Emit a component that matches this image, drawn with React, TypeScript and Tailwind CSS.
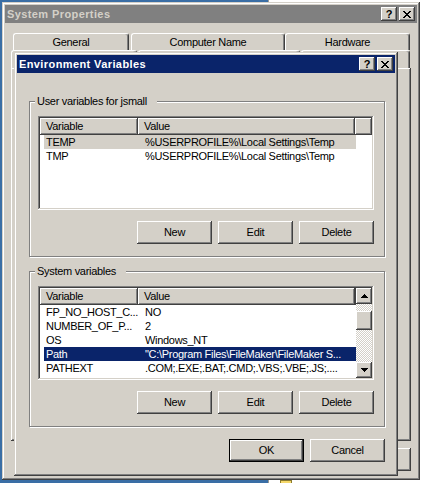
import React from 'react';

// classic 3D edges
const raised = 'shadow-[inset_-1px_-1px_#404040,inset_1px_1px_#ffffff,inset_-2px_-2px_#808080,inset_2px_2px_#d4d0c8]';
const frame = 'shadow-[inset_-1px_-1px_#404040,inset_1px_1px_#d4d0c8,inset_-2px_-2px_#808080,inset_2px_2px_#ffffff]';
const sunken = 'shadow-[inset_-1px_-1px_#ffffff,inset_1px_1px_#808080,inset_-2px_-2px_#d4d0c8,inset_2px_2px_#404040]';
const headerEdge = 'shadow-[inset_-1px_-1px_#404040,inset_1px_1px_#ffffff,inset_-2px_-2px_#808080]';

type Row = { name: string; value: string; sel?: 'gray' | 'navy' };

const userRows: Row[] = [
  { name: 'TEMP', value: '%USERPROFILE%\\Local Settings\\Temp', sel: 'gray' },
  { name: 'TMP', value: '%USERPROFILE%\\Local Settings\\Temp' },
];

const systemRows: Row[] = [
  { name: 'FP_NO_HOST_C...', value: 'NO' },
  { name: 'NUMBER_OF_P...', value: '2' },
  { name: 'OS', value: 'Windows_NT' },
  { name: 'Path', value: '"C:\\Program Files\\FileMaker\\FileMaker S...', sel: 'navy' },
  { name: 'PATHEXT', value: '.COM;.EXE;.BAT;.CMD;.VBS;.VBE;.JS;....' },
];

const CloseGlyph = () => (
  <svg width="8" height="7" viewBox="0 0 8 7" shapeRendering="crispEdges">
    <rect x="0" y="0" width="2" height="1" />
    <rect x="6" y="0" width="2" height="1" />
    <rect x="1" y="1" width="2" height="1" />
    <rect x="5" y="1" width="2" height="1" />
    <rect x="2" y="2" width="4" height="1" />
    <rect x="3" y="3" width="2" height="1" />
    <rect x="2" y="4" width="4" height="1" />
    <rect x="1" y="5" width="2" height="1" />
    <rect x="5" y="5" width="2" height="1" />
    <rect x="0" y="6" width="2" height="1" />
    <rect x="6" y="6" width="2" height="1" />
  </svg>
);

const Arrow = ({ up }: { up?: boolean }) => (
  <svg width="7" height="4" viewBox="0 0 7 4" shapeRendering="crispEdges" className={up ? '' : 'rotate-180'}>
    <rect x="3" y="0" width="1" height="1" />
    <rect x="2" y="1" width="3" height="1" />
    <rect x="1" y="2" width="5" height="1" />
    <rect x="0" y="3" width="7" height="1" />
  </svg>
);

const CaptionButtons = () => (
  <div className="flex gap-[2px]">
    <div className={`flex h-[14px] w-[16px] items-center justify-center bg-[#d4d0c8] text-black ${raised}`}>
      <span className="text-[11px] font-bold leading-none tracking-normal">?</span>
    </div>
    <div className={`flex h-[14px] w-[16px] items-center justify-center bg-[#d4d0c8] text-black ${raised}`}>
      <CloseGlyph />
    </div>
  </div>
);

const TitleBar = ({ title, active }: { title: string; active?: boolean }) => (
  <div
    className={`flex h-[18px] items-center justify-between pl-[2px] pr-[2px] ${
      active ? 'bg-[#0a246a] text-white' : 'bg-[#808080] text-[#d4d0c8]'
    }`}
  >
    <span className="font-bold tracking-[0.4px]">{title}</span>
    <CaptionButtons />
  </div>
);

const Btn = ({ label, def }: { label?: string; def?: boolean }) => (
  <div className={`h-[23px] w-[75px] shrink-0 ${def ? 'border border-black' : ''}`}>
    <div className={`flex h-full w-full items-center justify-center bg-[#d4d0c8] ${raised}`}>{label}</div>
  </div>
);

const Tab = ({ className, children }: { className: string; children?: React.ReactNode }) => (
  <div
    className={`flex h-full items-center justify-center rounded-t-[3px] border-l border-r border-t border-l-white border-r-[#404040] border-t-white bg-[#d4d0c8] pt-[1px] shadow-[inset_-1px_0_#808080] ${className}`}
  >
    {children}
  </div>
);

const ScrollBar = () => (
  <div className="flex h-full w-[16px] shrink-0 flex-col">
    <div className={`flex h-[16px] items-center justify-center bg-[#d4d0c8] ${raised}`}>
      <Arrow up />
    </div>
    <div className="flex-1 bg-[repeating-conic-gradient(#d4d0c8_0_25%,#ffffff_0_50%)] bg-[length:2px_2px] pt-[7px]">
      <div className={`h-[19px] w-[16px] bg-[#d4d0c8] ${raised}`} />
    </div>
    <div className={`flex h-[16px] items-center justify-center bg-[#d4d0c8] ${raised}`}>
      <Arrow />
    </div>
  </div>
);

const ListView = ({ rows, scroll }: { rows: Row[]; scroll?: boolean }) => (
  <div className={`h-[94px] w-full bg-white p-[2px] ${sunken}`}>
    <div className="flex h-full overflow-hidden">
      <div className="min-w-0 flex-1 overflow-hidden">
        <div className="flex h-[17px]">
          <div className={`w-[98px] shrink-0 bg-[#d4d0c8] pl-[6px] leading-[17px] ${headerEdge}`}>Variable</div>
          <div className={`w-[217px] shrink-0 bg-[#d4d0c8] pl-[6px] leading-[17px] ${headerEdge}`}>Value</div>
          <div className={`flex-1 bg-[#d4d0c8] ${headerEdge}`} />
        </div>
        {rows.map((r) => (
          <div
            key={r.name}
            className={`ml-[4px] flex h-[14px] w-[312px] leading-[14px] ${
              r.sel === 'navy' ? 'bg-[#0a246a] text-white' : r.sel === 'gray' ? 'bg-[#d4d0c8]' : ''
            }`}
          >
            <div className="w-[94px] shrink-0 overflow-hidden whitespace-nowrap pl-[2px]">{r.name}</div>
            <div className="min-w-0 flex-1 overflow-hidden whitespace-nowrap pl-[7px]">{r.value}</div>
          </div>
        ))}
      </div>
      {scroll && <ScrollBar />}
    </div>
  </div>
);

const Group = ({ label, className = '', children }: { label: string; className?: string; children: React.ReactNode }) => (
  <div
    className={`relative h-[156px] border border-[#808080] pl-[8px] pr-[10px] pt-[14px] shadow-[1px_1px_0_#ffffff,inset_1px_1px_0_#ffffff] ${className}`}
  >
    <span className="absolute left-[5px] top-[-8px] bg-[#d4d0c8] pl-[2px] pr-[10px] leading-[14px]">{label}</span>
    {children}
  </div>
);

// only the edges of the second tab row, the page and the Apply button peek out
const SystemProperties = () => (
  <div className={`absolute left-[2px] top-[2px] h-[478px] w-[418px] bg-[#d4d0c8] p-[3px] ${frame}`}>
    <TitleBar title="System Properties" />
    <div className="px-[6px] pt-[10px]">
      <div className="flex h-[17px] pl-[2px]">
        <Tab className="w-[116px]">General</Tab>
        <Tab className="ml-[2px] w-[154px]">Computer Name</Tab>
        <Tab className="w-[125px]">Hardware</Tab>
      </div>
      <div className="flex h-[18px]">
        <Tab className="w-[126px]" />
        <Tab className="ml-[1px] w-[162px]" />
        <Tab className="ml-[1px] w-[109px]" />
      </div>
      <div className={`h-[373px] w-[400px] ${headerEdge}`} />
      <div className="mt-[7px] flex w-[400px] justify-end gap-[6px]">
        <Btn />
        <Btn />
        <Btn />
      </div>
    </div>
  </div>
);

const EnvironmentVariables = () => (
  <div className={`absolute left-[14px] top-[52px] h-[424px] w-[384px] bg-[#d4d0c8] p-[3px] ${frame}`}>
    <TitleBar title="Environment Variables" active />
    <div className="pl-[12px] pr-[10px] pt-[28px]">
      <Group label="User variables for jsmall">
        <ListView rows={userRows} />
        <div className="mt-[11px] flex justify-end gap-[6px]">
          <Btn label="New" />
          <Btn label="Edit" />
          <Btn label="Delete" />
        </div>
      </Group>
      <Group label="System variables" className="mt-[14px]">
        <ListView rows={systemRows} scroll />
        <div className="mt-[11px] flex justify-end gap-[6px]">
          <Btn label="New" />
          <Btn label="Edit" />
          <Btn label="Delete" />
        </div>
      </Group>
      <div className="mt-[12px] flex justify-end gap-[6px]">
        <Btn label="OK" def />
        <Btn label="Cancel" />
      </div>
    </div>
  </div>
);

export default function App() {
  return (
    <div className="relative h-[483px] w-[422px] overflow-hidden bg-[#3a6ea5] font-['Liberation_Sans',Arial,sans-serif] text-[11px] tracking-[-0.3px] text-black">
      {/* explorer window sitting behind, top right */}
      <div className="absolute left-[268px] top-0 h-full w-[154px] border-l border-[#9c9a94] bg-white">
        <div className="absolute left-[11px] top-[480px] h-[3px] w-[12px] border border-b-0 border-[#8a7a30] bg-[#f5d86a]" />
      </div>
      <SystemProperties />
      <EnvironmentVariables />
    </div>
  );
}
